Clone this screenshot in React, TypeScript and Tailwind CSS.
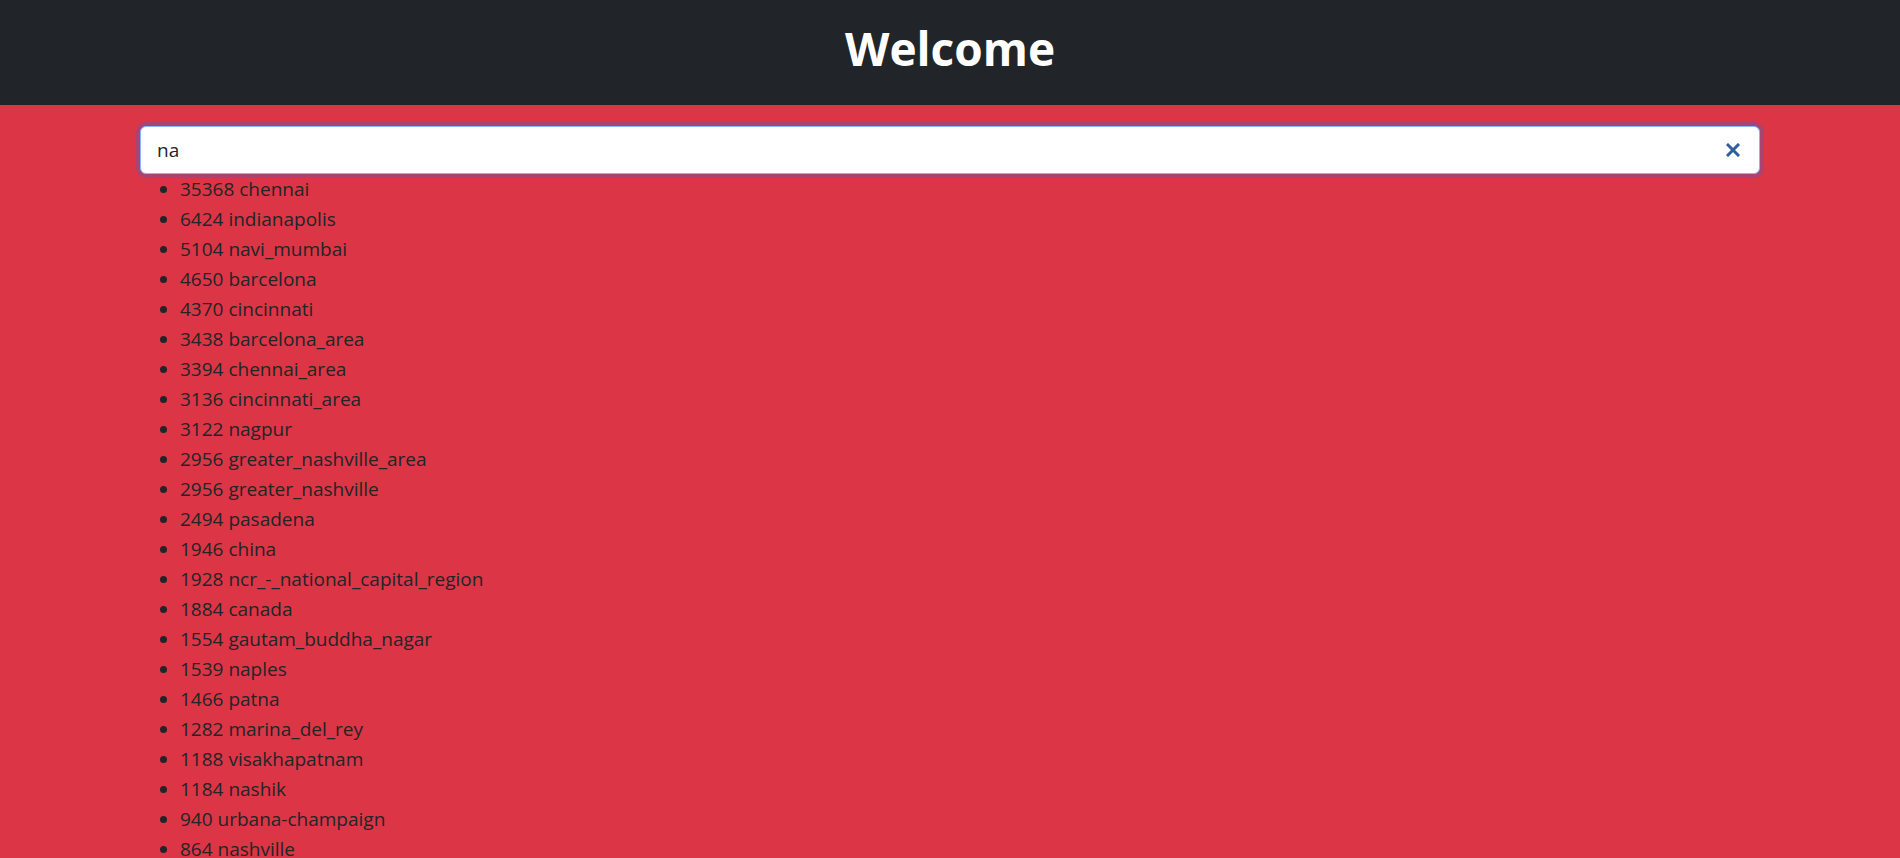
import React, { useState } from 'react';

const results: [number, string][] = [
  [35368, 'chennai'],
  [6424, 'indianapolis'],
  [5104, 'navi_mumbai'],
  [4650, 'barcelona'],
  [4370, 'cincinnati'],
  [3438, 'barcelona_area'],
  [3394, 'chennai_area'],
  [3136, 'cincinnati_area'],
  [3122, 'nagpur'],
  [2956, 'greater_nashville_area'],
  [2956, 'greater_nashville'],
  [2494, 'pasadena'],
  [1946, 'china'],
  [1928, 'ncr_-_national_capital_region'],
  [1884, 'canada'],
  [1554, 'gautam_buddha_nagar'],
  [1539, 'naples'],
  [1466, 'patna'],
  [1282, 'marina_del_rey'],
  [1188, 'visakhapatnam'],
  [1184, 'nashik'],
  [940, 'urbana-champaign'],
  [864, 'nashville'],
];

const App: React.FC = () => {
  const [query, setQuery] = useState('na');

  return (
    <div className="h-screen overflow-hidden bg-[#dc3545] text-[#212529] font-['Open_Sans',sans-serif]">
      {/* Header */}
      <header className="h-[105px] bg-[#212529] flex items-center justify-center">
        <h1 className="text-[46px] font-bold text-white leading-none -mt-[10px]">Welcome</h1>
      </header>

      {/* Search */}
      <div className="mx-[140px] pt-[21px]">
        <div className="relative">
          <input
            value={query}
            onChange={(e) => setQuery(e.target.value)}
            className="w-full h-[48px] bg-white rounded-[6px] border border-[#86b7fe] pl-4 pr-12 text-[19px] text-[#212529] outline-none shadow-[0_0_0_4px_rgba(13,110,253,0.25)]"
          />
          <button
            onClick={() => setQuery('')}
            className="absolute right-[20px] top-1/2 -translate-y-1/2 text-[#2f5f9e]"
          >
            <svg width="14" height="14" viewBox="0 0 14 14" fill="none" stroke="currentColor" strokeWidth="3" strokeLinecap="square">
              <path d="M2 2 12 12" />
              <path d="M12 2 2 12" />
            </svg>
          </button>
        </div>

        {/* Results */}
        <ul className="list-disc pl-10 text-[19px] leading-[30px]">
          {results.map(([count, name], i) => (
            <li key={i}>
              {count} {name}
            </li>
          ))}
        </ul>
      </div>
    </div>
  );
};

export default App;
